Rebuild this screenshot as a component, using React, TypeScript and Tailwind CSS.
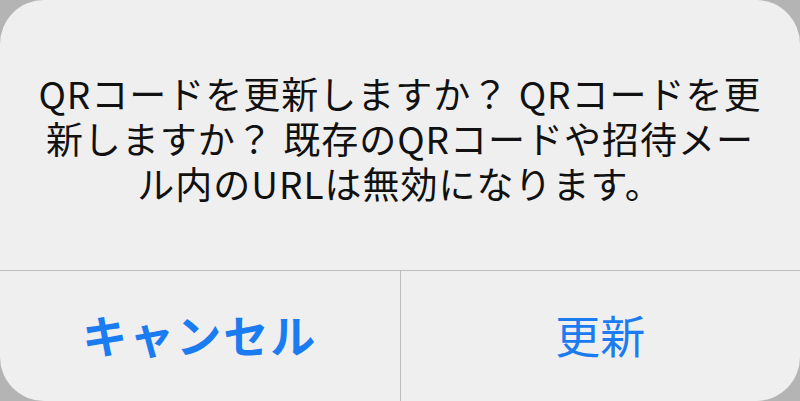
import React from 'react';

const lines = [
  'QRコードを更新しますか？ QRコードを更',
  '新しますか？ 既存のQRコードや招待メー',
  'ル内のURLは無効になります。',
];

export default function App() {
  return (
    <div className="w-[800px] h-[401px] bg-[#b4b4b4] overflow-hidden" style={{ fontFamily: '"Noto Sans CJK JP", "Noto Sans", sans-serif' }}>
      <div className="w-full h-full rounded-[44px] bg-[#efefef] flex flex-col overflow-hidden">
        <div className="h-[270px] flex flex-col items-center justify-center pt-[6px] text-[37px] leading-[45px] text-[#111] tracking-[1px]">
          {lines.map((l, i) => (
            <div key={i} className="whitespace-nowrap">{l}</div>
          ))}
        </div>
        <div className="flex-1 flex border-t-[1.5px] border-[#bdbdbd]">
          <button className="flex-1 flex items-center justify-center pb-[2px] text-[45px] font-bold tracking-[2px] text-[#1b7cf2] border-r-[1.5px] border-[#bdbdbd]">
            キャンセル
          </button>
          <button className="flex-1 flex items-center justify-center pb-[2px] text-[45px] text-[#1b7cf2]">
            更新
          </button>
        </div>
      </div>
    </div>
  );
}
